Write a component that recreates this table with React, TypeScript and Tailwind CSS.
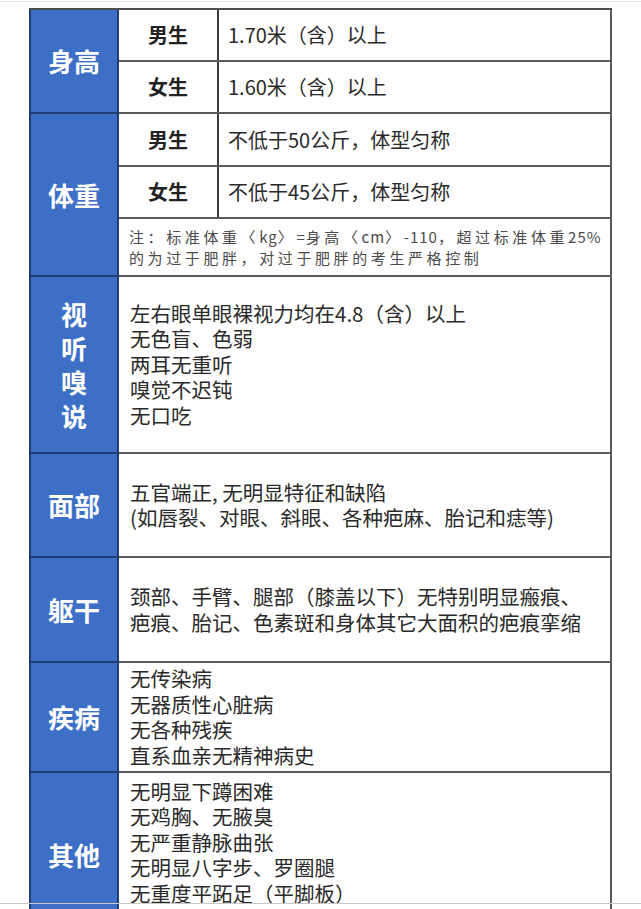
import React from "react";

const Head = ({ children, h, vertical }: { children: React.ReactNode; h: string; vertical?: boolean }) => (
  <div
    className={`${h} flex w-[90px] shrink-0 items-center justify-center border-b-2 border-l-2 border-r-2 border-[#213d73] bg-[#3d6fc7] text-[26px] font-bold text-white ${vertical ? "flex-col leading-[34px]" : "leading-none"}`}
  >
    {children}
  </div>
);

const SubRow = ({ label, value, h }: { label: string; value: string; h: string }) => (
  <div className={`${h} flex border-b-2 border-[#5a5a5a]`}>
    <div className="flex w-[100px] shrink-0 items-center justify-center border-r-2 border-[#3a3a3a] text-[20px] font-bold text-[#222]">
      {label}
    </div>
    <div className="flex flex-1 items-center pl-[9px] text-[20px] text-[#2a2a2a]">{value}</div>
  </div>
);

const Lines = ({ lines, h }: { lines: string[]; h: string }) => (
  <div
    className={`${h} flex flex-1 flex-col justify-center border-b-2 border-r-2 border-[#5a5a5a] pl-[11px] text-[20.5px] leading-[25.5px] text-[#2a2a2a]`}
  >
    {lines.map((l, i) => (
      <div key={i} className="whitespace-nowrap">
        {l}
      </div>
    ))}
  </div>
);

const Lat = ({ children }: { children: React.ReactNode }) => (
  <span className="tracking-[1px]">{children}</span>
);

export default function App() {
  return (
    <div className="relative h-[909px] w-[641px] overflow-hidden bg-white font-['Noto_Sans_CJK_SC','Noto_Sans',sans-serif]">
      <div className="mt-[1px] h-px w-full bg-[#e6e6e6]" />
      <div className="ml-[29px] mt-[6px] w-[583px] border-t-2 border-[#4d4d4d]">
        {/* 身高 */}
        <div className="flex">
          <Head h="h-[104px]">身高</Head>
          <div className="flex flex-1 flex-col border-r-2 border-[#5a5a5a]">
            <SubRow h="h-[52px]" label="男生" value="1.70米（含）以上" />
            <SubRow h="h-[52px]" label="女生" value="1.60米（含）以上" />
          </div>
        </div>
        {/* 体重 */}
        <div className="flex">
          <Head h="h-[163px]">体重</Head>
          <div className="flex flex-1 flex-col border-r-2 border-[#5a5a5a]">
            <SubRow h="h-[53px]" label="男生" value="不低于50公斤，体型匀称" />
            <SubRow h="h-[52px]" label="女生" value="不低于45公斤，体型匀称" />
            <div className="flex h-[58px] flex-col justify-center border-b-2 border-[#5a5a5a] pl-[10px] text-[15px] leading-[21px] tracking-[3.6px] text-[#4a4a4a]">
              <div className="whitespace-nowrap">
                注：标准体重〈<Lat>kg</Lat>〉<Lat>=</Lat>身高〈<Lat>cm</Lat>〉<Lat>-110</Lat>，超过标准体重<Lat>25%</Lat>
              </div>
              <div className="whitespace-nowrap">的为过于肥胖，对过于肥胖的考生严格控制</div>
            </div>
          </div>
        </div>
        {/* 视听嗅说 */}
        <div className="flex">
          <Head h="h-[177px]" vertical>
            <span>视</span>
            <span>听</span>
            <span>嗅</span>
            <span>说</span>
          </Head>
          <Lines
            h="h-[177px]"
            lines={["左右眼单眼裸视力均在4.8（含）以上", "无色盲、色弱", "两耳无重听", "嗅觉不迟钝", "无口吃"]}
          />
        </div>
        {/* 面部 */}
        <div className="flex">
          <Head h="h-[104px]">面部</Head>
          <Lines h="h-[104px]" lines={["五官端正, 无明显特征和缺陷", "(如唇裂、对眼、斜眼、各种疤麻、胎记和痣等)"]} />
        </div>
        {/* 躯干 */}
        <div className="flex">
          <Head h="h-[105px]">躯干</Head>
          <Lines
            h="h-[105px]"
            lines={["颈部、手臂、腿部（膝盖以下）无特别明显瘢痕、", "疤痕、胎记、色素斑和身体其它大面积的疤痕挛缩"]}
          />
        </div>
        {/* 疾病 */}
        <div className="flex">
          <Head h="h-[110px]">疾病</Head>
          <Lines h="h-[110px]" lines={["无传染病", "无器质性心脏病", "无各种残疾", "直系血亲无精神病史"]} />
        </div>
        {/* 其他 */}
        <div className="flex">
          <Head h="h-[166px]">其他</Head>
          <Lines
            h="h-[166px]"
            lines={["无明显下蹲困难", "无鸡胸、无腋臭", "无严重静脉曲张", "无明显八字步、罗圈腿", "无重度平跖足（平脚板）", "无文身、无久治不愈的皮肤病"]}
          />
        </div>
      </div>
      <div className="absolute left-0 top-[903px] h-px w-full bg-[#c8c8c8]" />
    </div>
  );
}
